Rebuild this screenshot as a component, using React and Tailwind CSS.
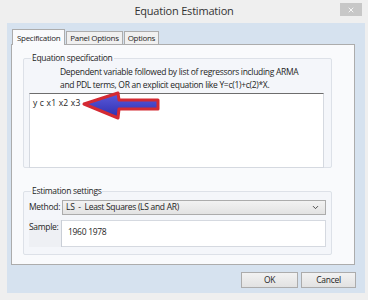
import { ChevronDown, X } from 'lucide-react';

// red-outlined blue pointer drawn in the textarea's own coordinates
const Arrow = () => (
  <svg
    className="pointer-events-none absolute left-0 top-[-4px] overflow-visible"
    width="140"
    height="34"
    viewBox="0 -4 140 34"
  >
    <defs>
      <linearGradient id="arrowFill" x1="0" y1="0" x2="0" y2="1">
        <stop offset="0" stopColor="#5b5bdc" />
        <stop offset="1" stopColor="#2e2eae" />
      </linearGradient>
    </defs>
    <path
      d="M54 10 L88 -1 L89 6 L128 6 L128 15 L89 15 L88 24 Z"
      fill="url(#arrowFill)"
      stroke="#d42a33"
      strokeWidth="3"
      strokeLinejoin="round"
    />
  </svg>
);

const App = () => {
  return (
    <div className="relative h-[300px] w-[368px] overflow-hidden bg-[#efefef] font-['Open_Sans',sans-serif] text-[#1e1e1e]">
      {/* title bar */}
      <div className="flex h-[23px] items-center justify-center text-[11px] tracking-[-0.2px] text-[#333]">
        Equation Estimation
      </div>
      <div className="absolute right-[6px] top-[3px] flex h-[13px] w-[22px] items-center justify-center bg-[#c7c7c7]">
        <X className="h-[8px] w-[8px] text-white" strokeWidth={2.5} />
      </div>

      {/* frame */}
      <div className="ml-[7px] flex h-[270px] w-[358px] flex-col bg-[#d6e2ef] pl-[4px] pr-[10px] pt-[6px] tracking-[-0.3px]">
        {/* tabs */}
        <div className="flex h-[15px] items-end pl-[1px] text-[8px] leading-none">
          <div className="relative z-10 -mb-px flex h-[16px] items-center border border-b-0 border-[#acacac] bg-[#f9fafc] px-[4px]">
            Specification
          </div>
          <div className="ml-[1px] flex h-[13px] items-center border border-b-0 border-[#acacac] bg-[#f0f0f0] px-[3px]">
            Panel Options
          </div>
          <div className="ml-[1px] flex h-[13px] items-center border border-b-0 border-[#acacac] bg-[#f0f0f0] px-[3px]">
            Options
          </div>
        </div>

        {/* panel */}
        <div className="flex h-[221px] flex-col border border-[#acacac] bg-[#f9fafc] px-[11px] text-[8.5px] leading-none">
          <fieldset className="mt-[9px] h-[114px] w-[309px] rounded-[2px] border border-[#dde1e8] bg-[#f4f6fa] px-[5px] pb-[4px]">
            <legend className="ml-[2px] px-[1px]">Equation specification</legend>
            <div className="mt-[2px] pl-[31px] leading-[13px]">
              <div>Dependent variable followed by list of regressors including ARMA</div>
              <div>and PDL terms, OR an explicit equation like Y=c(1)+c(2)*X.</div>
            </div>
            <div className="relative mt-[2px] h-[75px] w-[295px] border-x border-b border-t border-[#d5d9e0] border-t-[#6d6d6d] bg-white px-[3px] pt-[5px]">
              <span className="tracking-[0.2px]">y c x1 x2 x3</span>
              <Arrow />
            </div>
          </fieldset>

          <fieldset className="mt-[19px] h-[68px] w-[309px] rounded-[2px] border border-[#dde1e8] bg-[#f4f6fa] px-[5px]">
            <legend className="ml-[2px] px-[1px]">Estimation settings</legend>
            <div className="mt-[4px] flex h-[15px] items-center">
              <div className="w-[33px]">Method:</div>
              <div className="flex h-[15px] w-[264px] items-center justify-between border border-[#acacac] bg-gradient-to-b from-[#f2f2f2] to-[#e3e3e3] px-[3px]">
                <span>LS&nbsp; - &nbsp;Least Squares (LS and AR)</span>
                <ChevronDown className="mr-[2px] h-[9px] w-[9px] text-[#444]" strokeWidth={2.5} />
              </div>
            </div>
            <div className="mt-[5px] flex h-[27px]">
              <div className="w-[33px] border-r border-[#c9ced6] bg-[#eef0f4] pt-[3px]">Sample:</div>
              <div className="w-[264px] border-y border-r border-[#d5d9e0] bg-white px-[6px] pt-[7px]">
                1960 1978
              </div>
            </div>
          </fieldset>
        </div>

        {/* buttons */}
        <div className="mt-[7px] flex justify-end gap-[3px] text-[8.5px]">
          <button className="flex h-[16px] w-[57px] items-center justify-center border border-[#acacac] bg-gradient-to-b from-[#f2f2f2] to-[#e2e2e2]">
            OK
          </button>
          <button className="-mr-[1px] flex h-[16px] w-[55px] items-center justify-center border border-[#acacac] bg-gradient-to-b from-[#f2f2f2] to-[#e2e2e2]">
            Cancel
          </button>
        </div>
      </div>
    </div>
  );
};

export default App;
